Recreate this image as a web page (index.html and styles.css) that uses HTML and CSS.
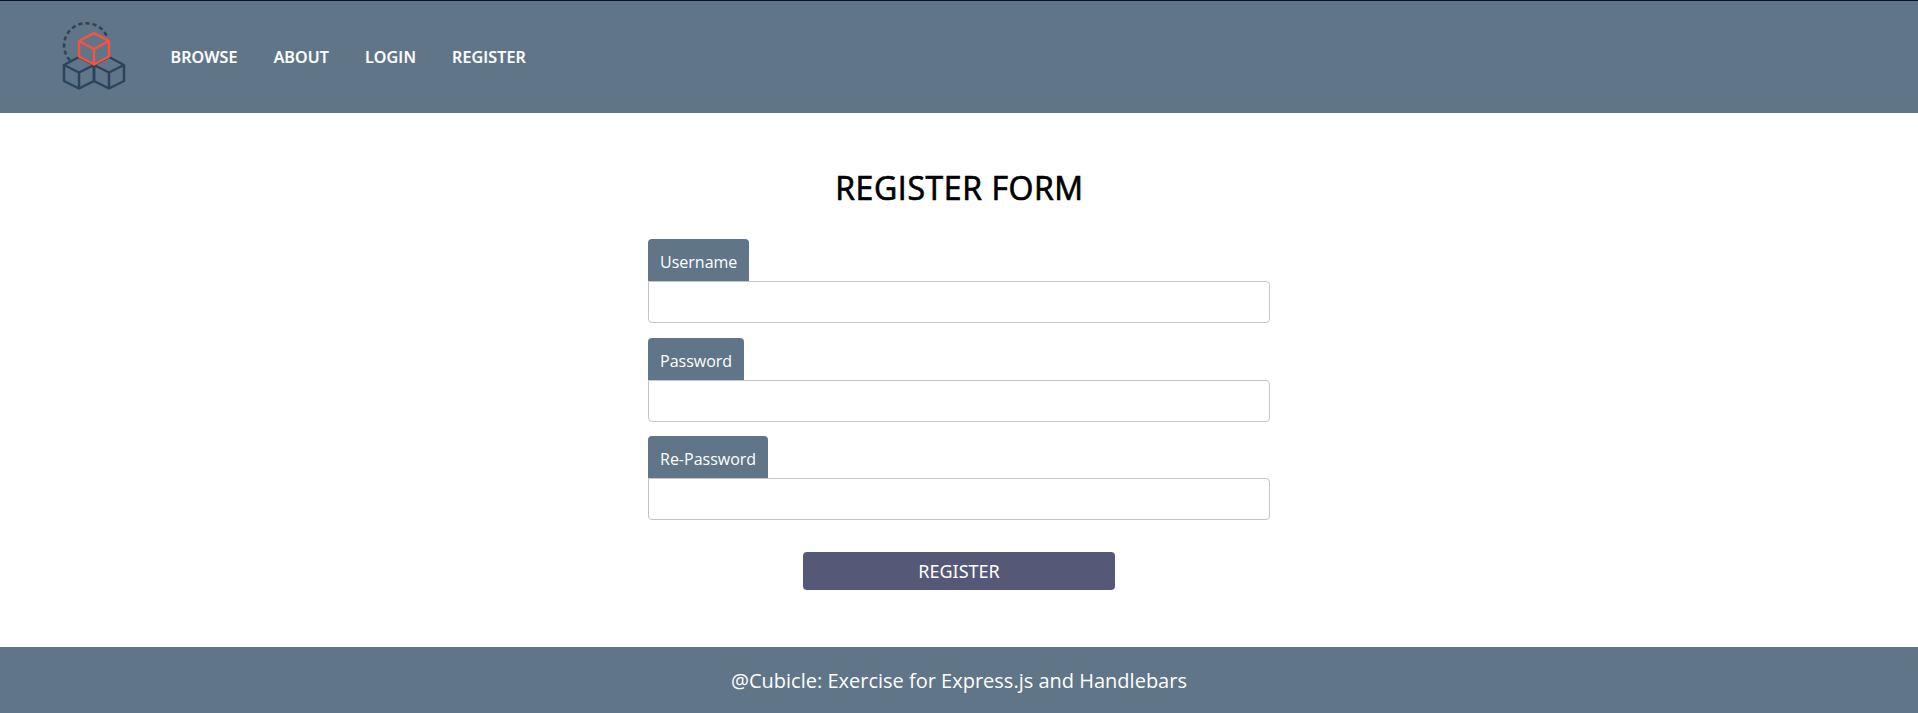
FILE: index.html
```html
<!DOCTYPE html>
<html lang="en">
<head>
<meta charset="utf-8">
<title>Cubicle</title>
<link rel="stylesheet" href="styles.css">
</head>
<body>
<header class="header">
  <a class="logo" href="#">
    <svg width="90" height="90" viewBox="0 0 90 90" fill="none" stroke-width="2.500" stroke-linejoin="round">
      <path class="orbit" d="M20 50.500A22.200 22.200 0 0 1 36 13.200A22.200 22.200 0 0 1 57.500 28"/>
      <path class="cube" d="M14 55L29 47L44 55V71L29 78.500L14 71ZM14 55L29 62.500L44 55M29 62.500V78.500"/>
      <path class="cube" d="M44 55L59 47L74 55V71L59 78.500L44 71ZM44 55L59 62.500L74 55M59 62.500V78.500"/>
      <path class="cube-top" d="M29 31L44 23.200L59 31V46.500L44 54.500L29 46.500ZM29 31L44 39L59 31M44 39V54.500"/>
    </svg>
  </a>
  <nav class="nav">
    <a href="#">BROWSE</a>
    <a href="#">ABOUT</a>
    <a href="#">LOGIN</a>
    <a href="#">REGISTER</a>
  </nav>
</header>
<main class="main">
  <h1 class="title">REGISTER FORM</h1>
  <form class="form">
    <div class="field"><label class="label" for="username">Username</label><input class="input" id="username" type="text"></div>
    <div class="field"><label class="label" for="password">Password</label><input class="input" id="password" type="password"></div>
    <div class="field last"><label class="label" for="repassword">Re-Password</label><input class="input" id="repassword" type="password"></div>
    <button class="submit" type="button">REGISTER</button>
  </form>
</main>
<footer class="footer">@Cubicle: Exercise for Express.js and Handlebars</footer>
</body>
</html>
```
FILE: styles.css
```css
* { box-sizing: border-box; }
body {
  margin: 0;
  height: 713px;
  display: flex;
  flex-direction: column;
  overflow: hidden;
  background: #fff;
  font-family: "Open Sans", "Noto Sans", sans-serif;
}
.header {
  height: 113px;
  display: flex;
  align-items: center;
  padding-left: 50px;
  border-top: 1px solid #0b1420;
  background: #607588;
}
.logo { display: block; width: 90px; height: 90px; margin-top: -4px; }
.logo svg { display: block; }
.cube { stroke: #2a445c; }
.cube-top { stroke: #f9533f; }
.orbit { stroke: #2a445c; stroke-dasharray: 4.200 3; }
.nav {
  display: flex;
  gap: 36px;
  margin-left: 30.500px;
  font-size: 16px;
  font-weight: 600;
  line-height: 22px;
  letter-spacing: 0.15px;
}
.nav a { color: #fff; text-decoration: none; -webkit-text-stroke: 0.2px #fff; }
.main {
  height: 534px;
  display: flex;
  flex-direction: column;
  align-items: center;
  padding-top: 53px;
}
.title {
  margin: 0 0 29px;
  padding-left: 1px;
  font-size: 32px;
  line-height: 44px;
  font-weight: 400;
  letter-spacing: 0.6px;
  -webkit-text-stroke: 0.7px #000;
  color: #000;
}
.form { width: 622px; display: flex; flex-direction: column; align-items: center; }
.field {
  width: 100%;
  display: flex;
  flex-direction: column;
  align-items: flex-start;
  margin-bottom: 15px;
}
.field:nth-child(2) { margin-bottom: 14px; }
.label {
  height: 42px;
  padding: 12px 12px 8px;
  border-radius: 4px 4px 0 0;
  background: #607588;
  color: #fff;
  font-size: 16px;
  line-height: 22px;
}
.input {
  width: 100%;
  height: 42px;
  border: 1px solid #c4c4c4;
  border-radius: 0 4px 4px 4px;
  background: #fff;
  outline: none;
}
.field.last { margin-bottom: 32px; }
.submit {
  width: 312px;
  height: 38px;
  padding: 0;
  border: 0;
  border-radius: 4px;
  background: #555876;
  color: #fff;
  font-family: "Noto Sans", sans-serif;
  font-size: 18px;
}
.footer {
  height: 66px;
  background: #607588;
  color: #fff;
  font-size: 20px;
  line-height: 67px;
  text-align: center;
}
```
